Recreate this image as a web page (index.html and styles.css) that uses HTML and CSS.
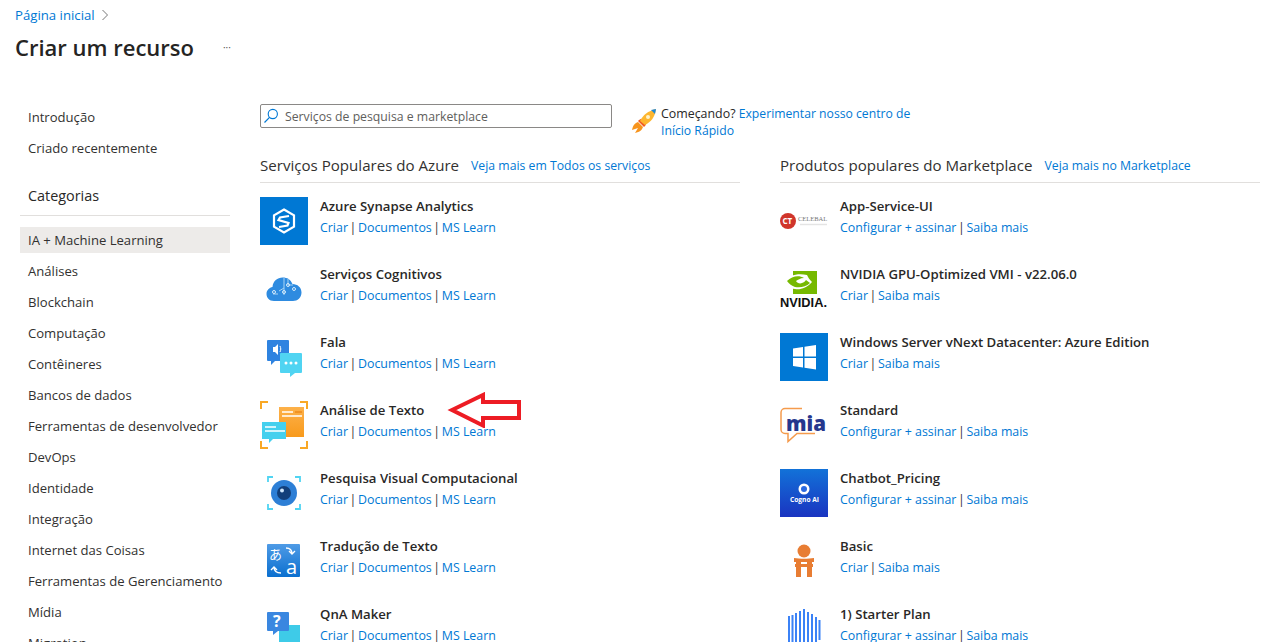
FILE: index.html
```html
<!DOCTYPE html>
<html lang="pt">
<head>
    <meta charset="UTF-8">
    <title>Criar um recurso</title>
    <link rel="stylesheet" href="styles.css">
</head>
<body>
    <div class="crumb"><a href="#">Página inicial</a>
        <svg class="crumb-arrow" width="8" height="12" viewBox="0 0 8 12"><path d="M1.5 1l5 5-5 5" fill="none" stroke="#777" stroke-width="1"/></svg>
    </div>
    <div class="title-row">
        <h1>Criar um recurso</h1>
        <span class="more">···</span>
    </div>

    <div class="layout">
        <!-- Menu lateral -->
        <nav class="side">
            <a class="side-item">Introdução</a>
            <a class="side-item">Criado recentemente</a>
            <div class="side-head">Categorias</div>
            <a class="side-item active">IA + Machine Learning</a>
            <a class="side-item">Análises</a>
            <a class="side-item">Blockchain</a>
            <a class="side-item">Computação</a>
            <a class="side-item">Contêineres</a>
            <a class="side-item">Bancos de dados</a>
            <a class="side-item">Ferramentas de desenvolvedor</a>
            <a class="side-item">DevOps</a>
            <a class="side-item">Identidade</a>
            <a class="side-item">Integração</a>
            <a class="side-item">Internet das Coisas</a>
            <a class="side-item">Ferramentas de Gerenciamento</a>
            <a class="side-item">Mídia</a>
            <a class="side-item">Migration</a>
        </nav>

        <main class="content">
            <div class="top-row">
                <div class="search">
                    <svg width="16" height="16" viewBox="0 0 16 16"><circle cx="9.800" cy="6" r="4.600" fill="none" stroke="#0078d4" stroke-width="1.100"/><path d="M6.500 9.400L1.500 14.500" stroke="#0078d4" stroke-width="1.200"/></svg>
                    <span>Serviços de pesquisa e marketplace</span>
                </div>
                <div class="quick">
                    <svg class="rocket" width="26" height="26" viewBox="0 0 26 26">
                        <path d="M1 22c1-5 3-7 6-8l5 5c-1 3-3 5-8 6l3-5z" fill="#f7941d"/>
                        <path d="M7 13c1-1 2-2 3-2l5 5c0 1-1 2-2 3z" fill="#f15a24"/>
                        <path d="M9 13C12 7 17 3 25 1c-1 8-5 13-11 16z" fill="#fdb62f"/>
                        <path d="M20 2l5-1-1 5z" fill="#1e88d8"/>
                        <circle cx="17" cy="9" r="2" fill="#fff3c9"/>
                    </svg>
                    <div class="quick-text">Começando? <a href="#">Experimentar nosso centro de<br>Início Rápido</a></div>
                </div>
            </div>

            <div class="columns">
                <section class="col">
                    <div class="col-head"><h2>Serviços Populares do Azure</h2><a href="#">Veja mais em Todos os serviços</a></div>

                    <div class="item">
                        <svg class="ico" viewBox="0 0 48 48"><rect width="48" height="48" fill="#0078d4"/><path d="M24 12.500l10 5.800v11.400l-10 5.800-10-5.800V18.300z" fill="none" stroke="#fff" stroke-width="2.200"/><path d="M29 19l-9 1.500-1.500 2.500 10 3-1 2.500-8.500 1.500" fill="none" stroke="#fff" stroke-width="2.200"/></svg>
                        <div class="info"><div class="name">Azure Synapse Analytics</div><div class="links"><a href="#">Criar</a><span class="sep">|</span><a href="#">Documentos</a><span class="sep">|</span><a href="#">MS Learn</a></div></div>
                    </div>
                    <div class="item">
                        <svg class="ico" viewBox="0 0 48 48"><g transform="translate(0 -4)"><path d="M14 40c-5 0-7.500-3.500-7.500-7 0-4 3-6.500 6-7 .5-6 5-9.500 10-9.500s8 2 10 6.500c5 0 9 3.500 9 8.500s-4 8.500-8.500 8.500z" fill="#2e8be0"/><path d="M24 17v10l-5 3M28 18v6h5M24 27v7M18 33h-5" fill="none" stroke="#a8d4f5" stroke-width="1"/><circle cx="28" cy="24" r="1.500" fill="none" stroke="#d6ecfb"/><circle cx="24" cy="31" r="1.500" fill="none" stroke="#d6ecfb"/><circle cx="14" cy="31" r="1.500" fill="none" stroke="#d6ecfb"/><circle cx="34" cy="28" r="1.500" fill="none" stroke="#d6ecfb"/></g></svg>
                        <div class="info"><div class="name">Serviços Cognitivos</div><div class="links"><a href="#">Criar</a><span class="sep">|</span><a href="#">Documentos</a><span class="sep">|</span><a href="#">MS Learn</a></div></div>
                    </div>
                    <div class="item">
                        <svg class="ico" viewBox="0 0 48 48"><path d="M8 7h20a1 1 0 0 1 1 1v19a1 1 0 0 1-1 1H15l-4 4v-4H8a1 1 0 0 1-1-1V8a1 1 0 0 1 1-1z" fill="#2f83e0"/><path d="M21 20h20a1 1 0 0 1 1 1v18a1 1 0 0 1-1 1h-6l-5 4v-4h-9a1 1 0 0 1-1-1V21a1 1 0 0 1 1-1z" fill="#50d4f2"/><path d="M13 14h2l3-3v11l-3-3h-2z" fill="#fff"/><path d="M20 13c1 2 1 4 0 6" stroke="#fff" fill="none"/><circle cx="26" cy="30" r="1.500" fill="#fff"/><circle cx="31" cy="30" r="1.500" fill="#fff"/><circle cx="36" cy="30" r="1.500" fill="#fff"/></svg>
                        <div class="info"><div class="name">Fala</div><div class="links"><a href="#">Criar</a><span class="sep">|</span><a href="#">Documentos</a><span class="sep">|</span><a href="#">MS Learn</a></div></div>
                    </div>
                    <div class="item">
                        <svg class="ico" viewBox="0 0 48 48"><defs><linearGradient id="ta" x1="0" y1="0" x2="0" y2="1"><stop offset="0" stop-color="#fdb14a"/><stop offset="1" stop-color="#f89a1c"/></linearGradient></defs><path d="M1 8V1h7M40 1h7v7M1 40v7h7M40 47h7v-7" fill="none" stroke="#f9a825" stroke-width="2"/><rect x="19" y="6" width="25" height="30" fill="url(#ta)"/><path d="M22 11h11M22 15h20" stroke="#fff" stroke-width="1.500"/><path d="M35 11h7" stroke="#ee8a1a" stroke-width="1.500"/><path d="M2 21h24v17H13l-4 4v-4H2z" fill="#44d0ee"/><path d="M5 26h11M5 30h20" stroke="#fff" stroke-width="1.500"/></svg>
                        <div class="info"><div class="name">Análise de Texto</div><div class="links"><a href="#">Criar</a><span class="sep">|</span><a href="#">Documentos</a><span class="sep">|</span><a href="#">MS Learn</a></div></div>
                        <svg class="red-arrow" width="76" height="36" viewBox="0 0 76 36"><path d="M5 18L36 3V10H72V26H36V33.500z" fill="#fff" stroke="#ed1c24" stroke-width="4"/></svg>
                    </div>
                    <div class="item">
                        <svg class="ico" viewBox="0 0 48 48"><path d="M8 13V8h5M35 8h5v5M8 35v5h5M35 40h5v-5" fill="none" stroke="#50d4f2" stroke-width="1.800"/><circle cx="24" cy="24" r="13" fill="#2d7fd6"/><circle cx="24" cy="24" r="7" fill="#123f7a"/><circle cx="22" cy="21.500" r="2" fill="#cfe6fb"/></svg>
                        <div class="info"><div class="name">Pesquisa Visual Computacional</div><div class="links"><a href="#">Criar</a><span class="sep">|</span><a href="#">Documentos</a><span class="sep">|</span><a href="#">MS Learn</a></div></div>
                    </div>
                    <div class="item">
                        <svg class="ico" viewBox="0 0 48 48"><defs><linearGradient id="tr" x1="0" y1="0" x2="0" y2="1"><stop offset="0" stop-color="#4f9be6"/><stop offset="1" stop-color="#0a6fcf"/></linearGradient></defs><rect x="7" y="7" width="33" height="33" rx="1" fill="url(#tr)"/><text x="9" y="22" class="ico-text">あ</text><text x="26" y="37" class="ico-text big">a</text><path d="M26 11c4 0 6 2 6 6M29 14l3 3 3-3M21 36c-5 0-7-2-7-6M11 33l3-3 3 3" fill="none" stroke="#fff" stroke-width="1.300"/></svg>
                        <div class="info"><div class="name">Tradução de Texto</div><div class="links"><a href="#">Criar</a><span class="sep">|</span><a href="#">Documentos</a><span class="sep">|</span><a href="#">MS Learn</a></div></div>
                    </div>
                    <div class="item">
                        <svg class="ico" viewBox="0 0 48 48"><rect x="19" y="20" width="21" height="26" fill="#3ecbe8"/><path d="M8 7h20a1 1 0 0 1 1 1v17a1 1 0 0 1-1 1H18l-5 4v-4H8a1 1 0 0 1-1-1V8a1 1 0 0 1 1-1z" fill="#3a87e0"/><text x="13" y="22" class="ico-text q">?</text></svg>
                        <div class="info"><div class="name">QnA Maker</div><div class="links"><a href="#">Criar</a><span class="sep">|</span><a href="#">Documentos</a><span class="sep">|</span><a href="#">MS Learn</a></div></div>
                    </div>
                </section>

                <section class="col">
                    <div class="col-head"><h2>Produtos populares do Marketplace</h2><a href="#">Veja mais no Marketplace</a></div>

                    <div class="item">
                        <svg class="ico" viewBox="0 0 48 48"><circle cx="8" cy="24" r="8" fill="#d0352b"/><text x="2.500" y="27" class="ico-text ct">CT</text><text x="18" y="24" class="ico-text celebal">CELEBAL</text><path d="M20 27.500h27" stroke="#e4e4e4" stroke-width="1.500"/></svg>
                        <div class="info"><div class="name">App-Service-UI</div><div class="links"><a href="#">Configurar + assinar</a><span class="sep">|</span><a href="#">Saiba mais</a></div></div>
                    </div>
                    <div class="item">
                        <svg class="ico" viewBox="0 0 48 48"><rect x="13" y="6" width="24" height="23" fill="#76b900"/><path d="M3 17c6-7 15-9 24-7 1 2 2 4 5 7-5 6-12 8-17 7-5 0-9-3-12-7z" fill="#fff"/><path d="M7 16c5-5 12-6 17-3-4 0-6 2-8 3 1 2 4 3 6 2 3-1 3-2 4-3l4 3c-4 4-10 5-15 4-3-1-6-3-8-6z" fill="#76b900"/><text x="0" y="42" textLength="47" lengthAdjust="spacingAndGlyphs" class="ico-text nv">NVIDIA.</text></svg>
                        <div class="info"><div class="name">NVIDIA GPU-Optimized VMI - v22.06.0</div><div class="links"><a href="#">Criar</a><span class="sep">|</span><a href="#">Saiba mais</a></div></div>
                    </div>
                    <div class="item">
                        <svg class="ico" viewBox="0 0 48 48"><rect width="48" height="48" fill="#0078d4"/><path d="M13 15.500l10-1.500v9.500H13zM24.500 13.800L36 12v11.500H24.500zM13 25h10v9.500l-10-1.500zM24.500 25H36v11.500l-11.500-1.800z" fill="#fff"/></svg>
                        <div class="info"><div class="name">Windows Server vNext Datacenter: Azure Edition</div><div class="links"><a href="#">Criar</a><span class="sep">|</span><a href="#">Saiba mais</a></div></div>
                    </div>
                    <div class="item">
                        <svg class="ico" viewBox="0 0 48 48"><path d="M22 7.500H5a4 4 0 0 0-4 4v17a4 4 0 0 0 4 4h3v8l9-8h18" fill="none" stroke="#f59b4c" stroke-width="1.500"/><text x="6" y="30" textLength="40" lengthAdjust="spacingAndGlyphs" class="ico-text mia">mia</text></svg>
                        <div class="info"><div class="name">Standard</div><div class="links"><a href="#">Configurar + assinar</a><span class="sep">|</span><a href="#">Saiba mais</a></div></div>
                    </div>
                    <div class="item">
                        <svg class="ico" viewBox="0 0 48 48"><defs><linearGradient id="cg" x1="0" y1="0" x2="0" y2="1"><stop offset="0" stop-color="#1272d8"/><stop offset="1" stop-color="#1a34c0"/></linearGradient></defs><rect width="48" height="48" fill="url(#cg)"/><circle cx="24" cy="20" r="5.500" fill="#fff"/><circle cx="24" cy="20" r="3" fill="#2a6ae0"/><text x="10" y="33" textLength="29" lengthAdjust="spacingAndGlyphs" class="ico-text cogno">Cogno AI</text></svg>
                        <div class="info"><div class="name">Chatbot_Pricing</div><div class="links"><a href="#">Configurar + assinar</a><span class="sep">|</span><a href="#">Saiba mais</a></div></div>
                    </div>
                    <div class="item">
                        <svg class="ico" viewBox="0 0 48 48"><circle cx="24" cy="14" r="6.500" fill="#e87d33"/><path d="M14 21c6 1 14 1 20 0v4h-2v2h1v3h-1v10h-5V30h-6v10h-5V30h-1v-3h1v-2h-2zM21 25v2h6v-2z" fill="#e87d33" fill-rule="evenodd"/></svg>
                        <div class="info"><div class="name">Basic</div><div class="links"><a href="#">Criar</a><span class="sep">|</span><a href="#">Saiba mais</a></div></div>
                    </div>
                    <div class="item">
                        <svg class="ico" viewBox="0 0 48 48"><path d="M9 11v26M12.500 10v30M16 8v34M20 6v38M24 4v42M28 7v36M32 9v32M36 12v26M39.500 15v20" stroke="#3b82f6" stroke-width="2" fill="none"/></svg>
                        <div class="info"><div class="name">1) Starter Plan</div><div class="links"><a href="#">Configurar + assinar</a><span class="sep">|</span><a href="#">Saiba mais</a></div></div>
                    </div>
                </section>
            </div>
        </main>
    </div>
</body>
</html>
```
FILE: styles.css
```css
html, body {
    height: 100%;
    overflow: hidden;
}
body {
    margin: 0;
    background: #fff;
    color: #292827;
    font-family: "Open Sans", "Noto Sans", sans-serif;
    font-size: 12.4px;
}
a {
    color: #0078d4;
    text-decoration: none;
}
.crumb {
    display: flex;
    align-items: center;
    gap: 6px;
    height: 16px;
    padding: 7px 0 0 15px;
    font-size: 13.2px;
}
.title-row {
    display: flex;
    align-items: center;
    height: 30px;
    margin-top: 9px;
    padding-left: 15px;
}
h1 {
    margin: 0;
    font-size: 22px;
    font-weight: 600;
    color: #252423;
}
.more {
    margin-left: 29px;
    color: #555;
    font-size: 10px;
}
.layout {
    display: flex;
    margin-top: 43px;
    padding-left: 20px;
}
.side {
    width: 210px;
    flex-shrink: 0;
    margin-top: -1px;
}
.side-item {
    display: block;
    height: 26px;
    line-height: 26px;
    margin-bottom: 5px;
    padding-left: 8px;
    font-size: 13.1px;
    color: #323130;
}
.side-item.active {
    background: #edebe9;
}
.side-head {
    margin-top: 25px;
    padding: 0 0 9px 8px;
    height: 20px;
    line-height: 20px;
    font-size: 14.4px;
    font-weight: 500;
    border-bottom: 1px solid #e1dfdd;
    margin-bottom: 11px;
}
.content {
    margin-left: 30px;
    width: 1000px;
}
.top-row {
    display: flex;
    align-items: flex-start;
}
.search {
    display: flex;
    align-items: center;
    gap: 6px;
    box-sizing: border-box;
    width: 352px;
    height: 24px;
    margin-top: -1px;
    padding-left: 2px;
    border: 1px solid #8a8886;
    border-radius: 2px;
    font-size: 12.25px;
    color: #605e5c;
}
.quick {
    display: flex;
    gap: 4px;
    margin: 0 0 0 19px;
}
.rocket {
    margin-top: 3px;
}
.quick-text {
    line-height: 17px;
    width: 270px;
}
.quick-text a {
    font-size: 12.2px;
}
.columns {
    display: flex;
    gap: 40px;
    margin-top: 9px;
}
.col {
    width: 480px;
}
.col-head {
    display: flex;
    align-items: center;
    gap: 12px;
    height: 34px;
    border-bottom: 1px solid #e1dfdd;
    margin-bottom: 14px;
    font-size: 12.25px;
}
h2 {
    margin: 0;
    font-size: 15.1px;
    font-weight: 400;
    color: #323130;
}
.item {
    display: flex;
    gap: 12px;
    height: 48px;
    margin-bottom: 20px;
    position: relative;
}
.ico {
    width: 48px;
    height: 48px;
    flex-shrink: 0;
}
.name {
    font-size: 13.2px;
    font-weight: 550;
    line-height: 18px;
    color: #292827;
}
.links {
    margin-top: 4px;
    line-height: 18px;
    color: #323130;
}
.sep {
    margin: 0 1.6px;
}
.red-arrow {
    position: absolute;
    left: 187px;
    top: -9px;
}
.ico-text {
    fill: #fff;
    font-family: "Noto Sans CJK JP", sans-serif;
    font-size: 13px;
}
.ico-text.big {
    font-family: "Open Sans", sans-serif;
    font-size: 20px;
}
.ico-text.q {
    font-family: "Open Sans", sans-serif;
    font-size: 16px;
    font-weight: 700;
}
.ico-text.ct {
    font-family: "Open Sans", sans-serif;
    font-size: 8px;
    font-weight: 700;
}
.ico-text.celebal {
    fill: #777;
    font-family: "Liberation Serif", serif;
    font-size: 6.5px;
}
.ico-text.nv {
    fill: #111;
    font-family: "Liberation Sans", sans-serif;
    font-size: 12px;
    font-weight: 700;
}
.ico-text.mia {
    fill: #26378d;
    font-family: "Open Sans", sans-serif;
    font-size: 21px;
    font-weight: 800;
}
.ico-text.cogno {
    font-family: "Open Sans", sans-serif;
    font-size: 7px;
    font-weight: 700;
}
```
